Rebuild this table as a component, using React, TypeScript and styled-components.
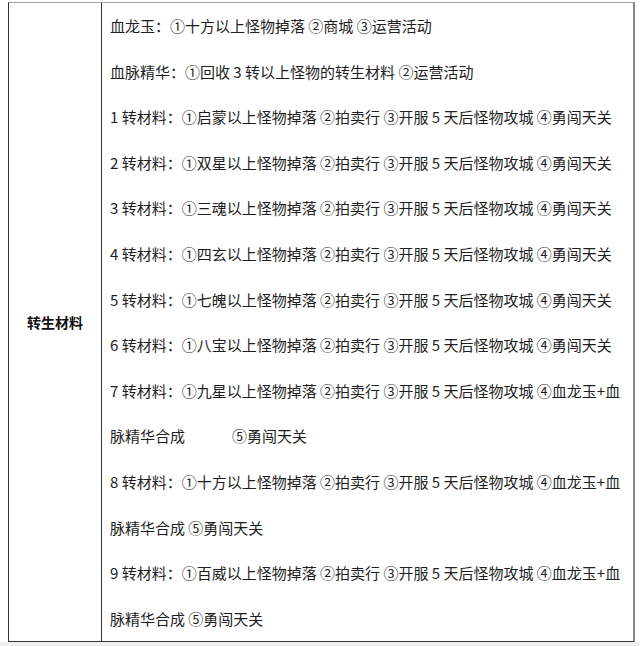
import React from 'react'
import styled, {createGlobalStyle} from 'styled-components'

const GlobalStyle = createGlobalStyle`
  html, body {
    margin: 0;
    padding: 0;
    background: #fff;
  }
  body {
    width: 640px;
    height: 646px;
    overflow: hidden;
    font-family: "Noto Sans CJK SC", "Noto Sans", sans-serif;
    color: #222;
  }
`

const lines: string[] = [
  '血龙玉：①十方以上怪物掉落 ②商城 ③运营活动',
  '血脉精华：①回收 3 转以上怪物的转生材料 ②运营活动',
  '1 转材料：①启蒙以上怪物掉落 ②拍卖行 ③开服 5 天后怪物攻城 ④勇闯天关',
  '2 转材料：①双星以上怪物掉落 ②拍卖行 ③开服 5 天后怪物攻城 ④勇闯天关',
  '3 转材料：①三魂以上怪物掉落 ②拍卖行 ③开服 5 天后怪物攻城 ④勇闯天关',
  '4 转材料：①四玄以上怪物掉落 ②拍卖行 ③开服 5 天后怪物攻城 ④勇闯天关',
  '5 转材料：①七魄以上怪物掉落 ②拍卖行 ③开服 5 天后怪物攻城 ④勇闯天关',
  '6 转材料：①八宝以上怪物掉落 ②拍卖行 ③开服 5 天后怪物攻城 ④勇闯天关',
  '7 转材料：①九星以上怪物掉落 ②拍卖行 ③开服 5 天后怪物攻城 ④血龙玉+血',
  '脉精华合成\u00a0\u00a0\u00a0\u00a0\u00a0\u00a0\u00a0\u00a0\u00a0\u00a0\u00a0\u00a0\u00a0 ⑤勇闯天关',
  '8 转材料：①十方以上怪物掉落 ②拍卖行 ③开服 5 天后怪物攻城 ④血龙玉+血',
  '脉精华合成 ⑤勇闯天关',
  '9 转材料：①百威以上怪物掉落 ②拍卖行 ③开服 5 天后怪物攻城 ④血龙玉+血',
  '脉精华合成 ⑤勇闯天关',
]

const App: React.FC = () => {
  return (
    <>
      <GlobalStyle />
      <StyledPage>
        <StyledTable>
          <StyledLabelCell>转生材料</StyledLabelCell>
          <StyledContentCell>
            {lines.map((line, i) => (
              <StyledLine key={i}>{line}</StyledLine>
            ))}
          </StyledContentCell>
        </StyledTable>
        <StyledFooter />
      </StyledPage>
    </>
  )
}

const StyledPage = styled.div`
  padding: 2px 5px 0 8px;
  display: flex;
  flex-direction: column;
  height: 646px;
  box-sizing: border-box;
`

const StyledTable = styled.div`
  display: grid;
  grid-template-columns: 93px 1fr;
  border-top: 1px solid #a0a0a0;
  border-left: 1px solid #333;
  border-right: 2px solid #888;
  border-bottom: 1px solid #333;
`

const StyledLabelCell = styled.div`
  display: flex;
  align-items: center;
  justify-content: center;
  border-right: 1px solid #333;
  font-size: 14px;
  font-weight: 700;
  color: #111;
`

const StyledContentCell = styled.div`
  padding: 0 0 0 8px;
`

const StyledLine = styled.div`
  height: 45.6px;
  line-height: 45.6px;
  font-size: 15px;
  white-space: pre;
  color: #1e1e1e;
`

const StyledFooter = styled.div`
  flex: 1;
  margin: 0 -5px 0 -8px;
  background: #f0f0f0;
`

export default App
